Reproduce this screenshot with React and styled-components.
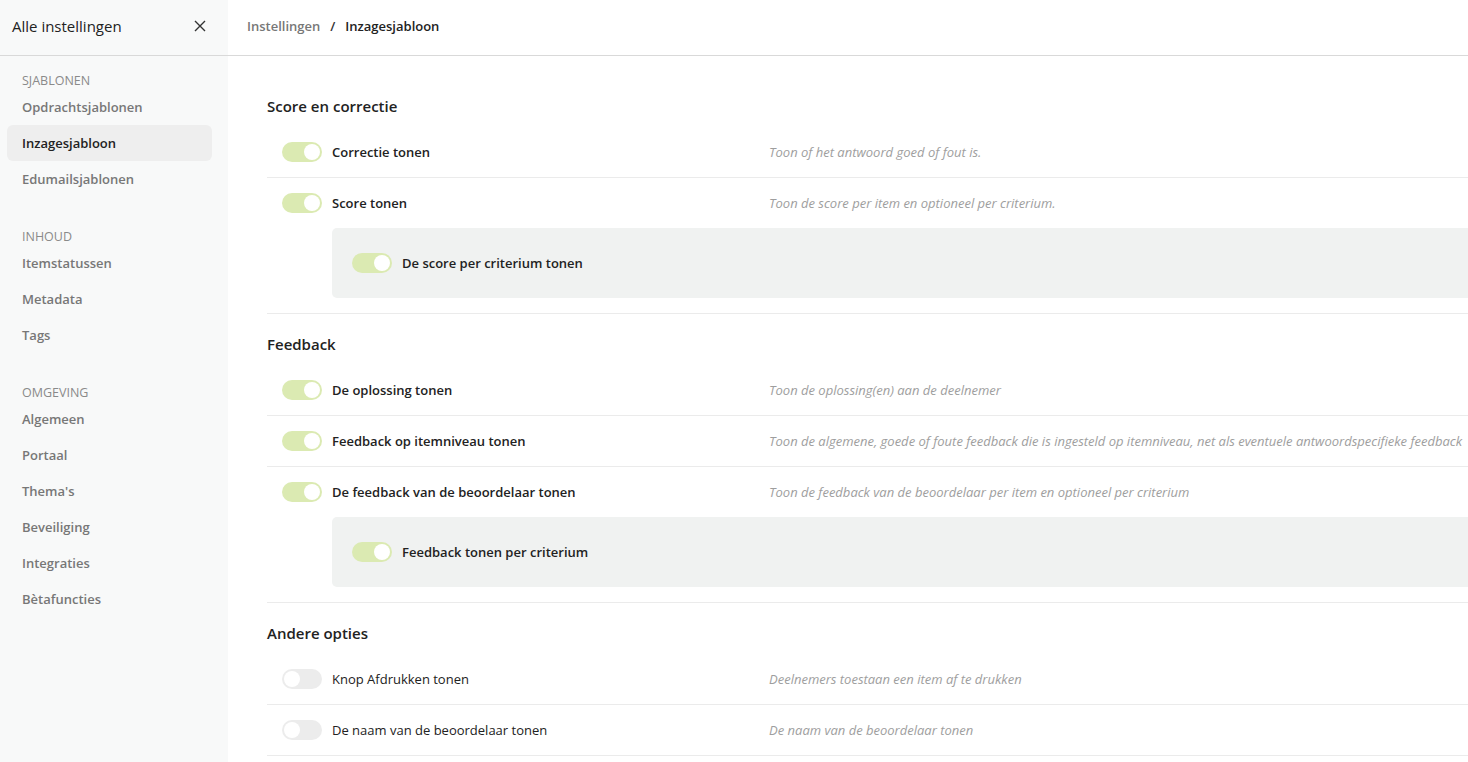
import React, { useState } from "react";
import styled, { createGlobalStyle } from "styled-components";

const GlobalStyle = createGlobalStyle`
  html, body {
    margin: 0;
    padding: 0;
    background: #fff;
    font-family: "Open Sans", "Noto Sans", sans-serif;
    color: #222;
    overflow: hidden;
  }
  * { box-sizing: border-box; }
`;

const Page = styled.div`
  display: flex;
  flex-direction: column;
  width: 1468px;
  height: 762px;
  overflow: hidden;
`;

const TopBar = styled.div`
  display: flex;
  height: 56px;
  border-bottom: 1px solid #d9d9d9;
  flex: none;
`;

const SideHead = styled.div`
  width: 228px;
  flex: none;
  background: #f8f9f9;
  display: flex;
  align-items: center;
  justify-content: space-between;
  padding: 0 22px 3px 12px;
  font-size: 15px;
  color: #222;
`;

const CloseButton = styled.button`
  background: none;
  border: none;
  padding: 0;
  display: flex;
  color: #333;
  cursor: pointer;
`;

const Breadcrumb = styled.div`
  display: flex;
  align-items: center;
  gap: 10px;
  padding: 0 0 3px 19px;
  font-size: 13px;
  font-weight: 600;
`;

const Crumb = styled.span`
  color: ${(p) => (p.$current ? "#222" : "#777")};
`;

const Slash = styled.span`
  color: #333;
  font-weight: 600;
`;

const Body = styled.div`
  display: flex;
  flex: 1;
  min-height: 0;
`;

const Sidebar = styled.nav`
  width: 228px;
  flex: none;
  background: #f8f9f9;
  padding: 16px 16px 0 7px;
`;

const Group = styled.div`
  margin-bottom: 31px;
`;

const GroupLabel = styled.div`
  height: 17px;
  line-height: 17px;
  padding-left: 15px;
  font-size: 12.5px;
  color: #8a8a8a;
  text-transform: uppercase;
`;

const NavItem = styled.div`
  height: 36px;
  display: flex;
  align-items: center;
  padding-left: 15px;
  font-size: 13px;
  font-weight: 600;
  border-radius: 6px;
  color: ${(p) => (p.$active ? "#222" : "#777")};
  background: ${(p) => (p.$active ? "#eeeeee" : "transparent")};
  cursor: pointer;
`;

const Main = styled.main`
  flex: 1;
  padding: 40px 0 0 39px;
  overflow: hidden;
`;

const Section = styled.section`
  margin-bottom: 20px;
`;

const SectionTitle = styled.h2`
  margin: 0 0 11px;
  height: 20px;
  line-height: 20px;
  font-size: 15px;
  font-weight: 600;
  color: #222;
`;

const Row = styled.div`
  border-bottom: 1px solid #ebebeb;
  padding-bottom: ${(p) => (p.$nested ? "15px" : "0")};
`;

const RowLine = styled.div`
  display: flex;
  align-items: center;
  height: 50px;
  padding-left: 15px;
`;

const Label = styled.span`
  width: 437px;
  flex: none;
  margin-left: 10px;
  font-size: 13px;
  font-weight: ${(p) => (p.$on ? 600 : 400)};
  color: #222;
  white-space: nowrap;
`;

const Description = styled.span`
  font-size: 13px;
  font-style: italic;
  color: #9e9e9e;
  white-space: nowrap;
`;

const NestedBox = styled.div`
  margin-left: 65px;
  height: 70px;
  background: #f0f2f1;
  border-radius: 5px 0 0 5px;
  display: flex;
  align-items: center;
  padding-left: 20px;
`;

const NestedLabel = styled.span`
  margin-left: 10px;
  font-size: 13px;
  font-weight: 600;
  color: #222;
`;

const Track = styled.button`
  position: relative;
  width: 40px;
  height: 20px;
  flex: none;
  border: none;
  padding: 0;
  border-radius: 10px;
  background: ${(p) => (p.$on ? "#dbeab2" : "#ececec")};
  cursor: pointer;
`;

const Knob = styled.span`
  position: absolute;
  top: 2px;
  left: ${(p) => (p.$on ? "22px" : "2px")};
  width: 16px;
  height: 16px;
  border-radius: 50%;
  background: #fff;
  transition: left 0.15s;
`;

function Toggle({ on, onChange }) {
  return (
    <Track $on={on} onClick={onChange}>
      <Knob $on={on} />
    </Track>
  );
}

const navGroups = [
  { label: "Sjablonen", items: ["Opdrachtsjablonen", "Inzagesjabloon", "Edumailsjablonen"] },
  { label: "Inhoud", items: ["Itemstatussen", "Metadata", "Tags"] },
  {
    label: "Omgeving",
    items: ["Algemeen", "Portaal", "Thema's", "Beveiliging", "Integraties", "Bètafuncties"],
  },
];

const initialSections = [
  {
    title: "Score en correctie",
    rows: [
      { id: "correctie", label: "Correctie tonen", desc: "Toon of het antwoord goed of fout is.", on: true },
      {
        id: "score",
        label: "Score tonen",
        desc: "Toon de score per item en optioneel per criterium.",
        on: true,
        nested: { id: "scoreCrit", label: "De score per criterium tonen", on: true },
      },
    ],
  },
  {
    title: "Feedback",
    rows: [
      { id: "oplossing", label: "De oplossing tonen", desc: "Toon de oplossing(en) aan de deelnemer", on: true },
      {
        id: "itemFeedback",
        label: "Feedback op itemniveau tonen",
        desc: "Toon de algemene, goede of foute feedback die is ingesteld op itemniveau, net als eventuele antwoordspecifieke feedback",
        on: true,
      },
      {
        id: "beoordelaar",
        label: "De feedback van de beoordelaar tonen",
        desc: "Toon de feedback van de beoordelaar per item en optioneel per criterium",
        on: true,
        nested: { id: "feedbackCrit", label: "Feedback tonen per criterium", on: true },
      },
    ],
  },
  {
    title: "Andere opties",
    rows: [
      { id: "print", label: "Knop Afdrukken tonen", desc: "Deelnemers toestaan een item af te drukken", on: false },
      { id: "naam", label: "De naam van de beoordelaar tonen", desc: "De naam van de beoordelaar tonen", on: false },
    ],
  },
];

export default function App() {
  const [state, setState] = useState(() => {
    const s = {};
    initialSections.forEach((sec) =>
      sec.rows.forEach((r) => {
        s[r.id] = r.on;
        if (r.nested) s[r.nested.id] = r.nested.on;
      })
    );
    return s;
  });

  const flip = (id) => setState((s) => ({ ...s, [id]: !s[id] }));

  return (
    <Page>
      <GlobalStyle />
      <TopBar>
        <SideHead>
          <span>Alle instellingen</span>
          <CloseButton aria-label="Sluiten">
            <svg width="12" height="12" viewBox="0 0 12 12">
              <path d="M1 1L11 11M11 1L1 11" stroke="#333" strokeWidth="1.4" />
            </svg>
          </CloseButton>
        </SideHead>
        <Breadcrumb>
          <Crumb>Instellingen</Crumb>
          <Slash>/</Slash>
          <Crumb $current>Inzagesjabloon</Crumb>
        </Breadcrumb>
      </TopBar>
      <Body>
        <Sidebar>
          {navGroups.map((g) => (
            <Group key={g.label}>
              <GroupLabel>{g.label}</GroupLabel>
              {g.items.map((item) => (
                <NavItem key={item} $active={item === "Inzagesjabloon"}>
                  {item}
                </NavItem>
              ))}
            </Group>
          ))}
        </Sidebar>
        <Main>
          {initialSections.map((sec) => (
            <Section key={sec.title}>
              <SectionTitle>{sec.title}</SectionTitle>
              {sec.rows.map((r) => (
                <Row key={r.id} $nested={!!r.nested}>
                  <RowLine>
                    <Toggle on={state[r.id]} onChange={() => flip(r.id)} />
                    <Label $on={r.on}>{r.label}</Label>
                    <Description>{r.desc}</Description>
                  </RowLine>
                  {r.nested && (
                    <NestedBox>
                      <Toggle on={state[r.nested.id]} onChange={() => flip(r.nested.id)} />
                      <NestedLabel>{r.nested.label}</NestedLabel>
                    </NestedBox>
                  )}
                </Row>
              ))}
            </Section>
          ))}
        </Main>
      </Body>
    </Page>
  );
}
